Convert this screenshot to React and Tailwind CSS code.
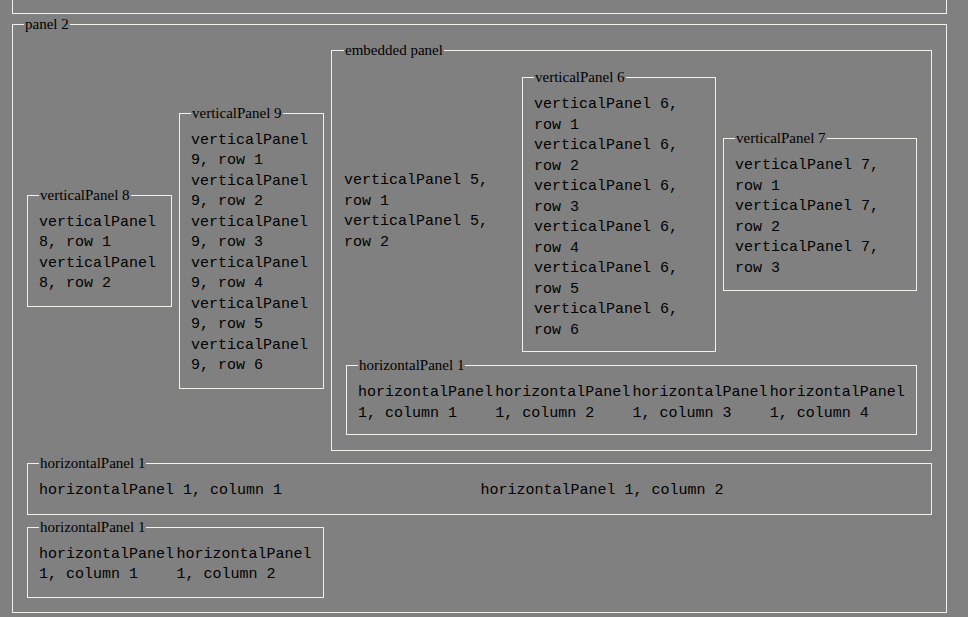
import React from 'react';

const line = "border-[#f2f2ea]";
const mono = "font-['Liberation_Mono','Courier_New',monospace] text-[15px] leading-[20.5px] text-black";

const Box = ({ legend, className = '', children }) => (
  <fieldset className={`border ${line} ${className}`}>
    <legend className="px-[1px] font-['Liberation_Serif','Times_New_Roman',serif] text-[15px] leading-[17px] text-black">
      {legend}
    </legend>
    {children}
  </fieldset>
);

const Rows = ({ items }) => (
  <div className={mono}>
    {items.map((t) => (
      <div key={t}>{t}</div>
    ))}
  </div>
);

const rows = (name, n) => Array.from({ length: n }, (_, i) => `${name}, row ${i + 1}`);

const Columns = ({ count, className }) => (
  <div className={`${mono} grid gap-x-[2px] ${className}`}>
    {Array.from({ length: count }, (_, i) => (
      <div key={i}>horizontalPanel 1, column {i + 1}</div>
    ))}
  </div>
);

export default function App() {
  return (
    <div className="min-h-screen bg-[#808080] overflow-hidden">
      <div className={`ml-[12px] w-[935px] h-[14px] border-x border-b ${line}`} />

      <Box legend="panel 2" className="ml-[12px] mt-[2px] w-[935px] pl-[11px] pr-[11px] pt-[9px] pb-[14px]">
        <div className="px-[3px]">
          <div className="flex items-center gap-[7px]">
            <Box legend="verticalPanel 8" className="w-[145px] px-[11px] pt-[9px] pb-[11px]">
              <Rows items={rows('verticalPanel 8', 2)} />
            </Box>
            <Box legend="verticalPanel 9" className="w-[145px] px-[11px] pt-[9px] pb-[11px]">
              <Rows items={rows('verticalPanel 9', 6)} />
            </Box>

            <Box legend="embedded panel" className="w-[601px] pl-[12px] pr-[14px] pt-[10px] pb-[15px]">
              <div className="flex items-center">
                <div className="w-[178px] pt-[3px]">
                  <Rows items={rows('verticalPanel 5', 2)} />
                </div>
                <Box legend="verticalPanel 6" className="w-[194px] px-[11px] pt-[9px] pb-[10px]">
                  <Rows items={rows('verticalPanel 6', 6)} />
                </Box>
                <Box legend="verticalPanel 7" className="ml-[7px] w-[194px] px-[11px] pt-[9px] pb-[11px]">
                  <Rows items={rows('verticalPanel 7', 3)} />
                </Box>
              </div>
              <Box legend="horizontalPanel 1" className="ml-[2px] mt-[5px] w-[571px] px-[11px] pt-[9px] pb-[10px]">
                <Columns count={4} className="grid-cols-4" />
              </Box>
            </Box>
          </div>

          <Box legend="horizontalPanel 1" className="mt-[4px] w-[905px] px-[11px] pt-[9px] pb-[12px]">
            <Columns count={2} className="grid-cols-2" />
          </Box>

          <Box legend="horizontalPanel 1" className="mt-[4px] w-[297px] px-[11px] pt-[9px] pb-[11px]">
            <Columns count={2} className="grid-cols-2" />
          </Box>
        </div>
      </Box>
    </div>
  );
}
